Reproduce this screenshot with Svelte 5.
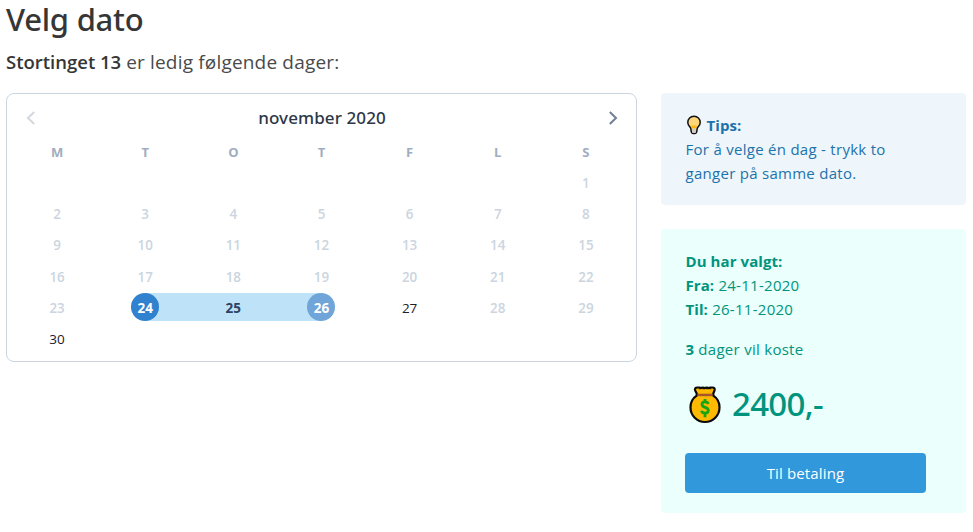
<script>
  const weekdays = ['M', 'T', 'O', 'T', 'F', 'L', 'S'];
  const leading = 6;
  const available = [24, 25, 26, 27, 30];
  const start = 24;
  const end = 26;
  const cells = Array.from({ length: 42 }, (_, i) => {
    const day = i - leading + 1;
    return day >= 1 && day <= 30 ? day : null;
  });
</script>

<main>
  <h1>Velg dato</h1>
  <p class="subtitle"><strong>Stortinget 13</strong> <span>er ledig følgende dager:</span></p>

  <div class="columns">
    <section class="calendar">
      <header>
        <button class="arrow prev" aria-label="Forrige">
          <svg width="10" height="14" viewBox="0 0 10 14"><path d="M8.2 1 2 7l6.2 6" /></svg>
        </button>
        <span class="month">november 2020</span>
        <button class="arrow" aria-label="Neste">
          <svg width="10" height="14" viewBox="0 0 10 14"><path d="M1.8 1 8 7l-6.2 6" /></svg>
        </button>
      </header>
      <div class="grid weekdays">
        {#each weekdays as name}<div>{name}</div>{/each}
      </div>
      <div class="grid days">
        {#each cells as day}
          <div
            class="day"
            class:free={available.includes(day)}
            class:start={day === start}
            class:between={day > start && day < end}
            class:end={day === end}
          >
            {#if day}<span>{day}</span>{/if}
          </div>
        {/each}
      </div>
    </section>

    <aside>
      <div class="box tips">
        <div class="line tip-title">
          <svg class="bulb" width="16" height="20" viewBox="0 0 16 20">
            <path d="M8 1.2a6.1 6.1 0 0 0-6.2 6.2c0 2.7 1.7 3.9 2.7 5.3.4.7.5 3.1.9 4.4.3 1 .9 1.5 1.7 1.5h1.8c.8 0 1.4-.5 1.7-1.5.4-1.3.5-3.7.9-4.4 1-1.4 2.7-2.6 2.7-5.3A6.1 6.1 0 0 0 8 1.2Z" fill="#ffd679" stroke="#111" stroke-width="1.5" />
            <path d="M5.3 10.4h5.4l-.8 3H6.1Z" fill="#ffba08" />
            <path d="M6.1 13.6h3.8v3.5l-.8.9H6.9l-.8-.9Z" fill="#ccc" />
          </svg>
          <strong>Tips:</strong>
        </div>
        <div class="line">For å velge én dag - trykk to</div>
        <div class="line">ganger på samme dato.</div>
      </div>

      <div class="box chosen">
        <div class="line"><strong>Du har valgt:</strong></div>
        <div class="line"><strong>Fra:</strong> 24-11-2020</div>
        <div class="line"><strong>Til:</strong> 26-11-2020</div>
        <div class="line cost"><strong>3</strong> dager vil koste</div>
        <div class="price">
          <svg width="32" height="38" viewBox="0 0 32 38">
            <path d="M8.2 1.5h2l1.5.6 2-.6 2 .6 2-.6 2 .6 1.7-.6h2.1c1.8 0 2.7 1.5 2 3L24.3 7.5v2.2c3.7 2.4 6.2 6.2 6.2 11.8A14.5 14.5 0 0 1 1.5 21.5C1.5 15.9 4 12.1 7.7 9.7V7.5L6.2 4.5c-.7-1.5.2-3 2-3Z" fill="#ffb900" stroke="#0a0a0a" stroke-width="2.2" stroke-linejoin="round" />
            <path d="M8.5 7.7h15v2.5h-15Z" fill="#a5562b" />
            <path d="M10.5 2.2v1m3.7-1v1m3.7-1v1m3.6-1v1" stroke="#0a0a0a" stroke-width="1.5" />
            <path d="M19.3 18c-.4-1.4-1.6-2.1-3.3-2.1-1.9 0-3 .9-3 2.5 0 3.7 6.3 2.3 6.3 6.1 0 1.7-1.3 2.7-3.3 2.7-1.9 0-3.1-.8-3.5-2.5M16 13v3m0 11v4.3" fill="none" stroke="#16a510" stroke-width="2.8" />
          </svg>
          <span>2400,-</span>
        </div>
        <button class="pay">Til betaling</button>
      </div>
    </aside>
  </div>
</main>

<style>
  :global(body) {
    background: #fff;
  }
  main {
    box-sizing: border-box;
    width: 973px;
    height: 532px;
    padding: 0 7px 0 6px;
    font-family: 'Open Sans', 'Noto Sans', sans-serif;
    font-size: 15px;
    color: #4a4a4a;
    white-space: nowrap;
  }
  h1 {
    margin: 0;
    height: 40px;
    line-height: 38px;
    font-family: 'Noto Sans', 'Open Sans', sans-serif;
    font-size: 31px;
    font-weight: 500;
    letter-spacing: -0.25px;
    color: #363636;
  }
  .subtitle {
    margin: 9px 0 0;
    height: 26px;
    line-height: 26px;
    font-size: 19px;
  }
  .subtitle strong {
    font-size: 18.5px;
    font-weight: 600;
    color: #363636;
  }
  .subtitle span {
    letter-spacing: 0.18px;
  }
  .columns {
    display: flex;
    gap: 24px;
    align-items: flex-start;
    margin-top: 18px;
  }
  .calendar {
    box-sizing: border-box;
    width: 631px;
    height: 269px;
    padding: 0 6px;
    border: 1px solid #cbd5e0;
    border-radius: 8px;
  }
  header {
    display: flex;
    align-items: center;
    justify-content: space-between;
    height: 48px;
    padding: 0 12px 0 13px;
  }
  .arrow {
    display: flex;
    padding: 0;
    border: 0;
    background: none;
    color: #718096;
  }
  .prev {
    opacity: 0.3;
  }
  .arrow path {
    fill: none;
    stroke: currentColor;
    stroke-width: 2;
  }
  .month {
    margin-top: -2px;
    font-family: 'Noto Sans', 'Open Sans', sans-serif;
    font-size: 17px;
    font-weight: 500;
    letter-spacing: 0.1px;
    color: #2d3748;
  }
  .grid {
    display: grid;
    grid-template-columns: repeat(7, 1fr);
    text-align: center;
    font-size: 13px;
  }
  .weekdays {
    height: 20px;
    line-height: 20px;
    font-weight: 700;
    color: #a0aec0;
  }
  .days {
    grid-auto-rows: 31.2px;
    margin-top: 4.5px;
  }
  .day {
    display: flex;
    align-items: center;
    justify-content: center;
    font-size: 13.4px;
    font-weight: 600;
    color: #cbd5e0;
  }
  .day span {
    box-sizing: border-box;
    width: 28px;
    height: 28px;
    padding-top: 1px;
    line-height: 28px;
    border-radius: 14px;
  }
  .free {
    font-size: 13.5px;
    font-weight: 400;
    color: #1a202c;
  }
  .start,
  .between,
  .end {
    font-weight: 700;
    background: linear-gradient(#bee3f8, #bee3f8) center / 100% 28px no-repeat;
  }
  .between {
    color: #2c4464;
  }
  .start {
    color: #fff;
    background-position: right center;
    background-size: 50% 28px;
  }
  .end {
    color: #fff;
    background-position: left center;
    background-size: 50% 28px;
  }
  .start span {
    background: #3182ce;
  }
  .end span {
    background: #6fa5d8;
  }
  aside {
    display: flex;
    flex-direction: column;
    gap: 24px;
    width: 305px;
  }
  .box {
    padding: 20px 40px 20px 24px;
    border-radius: 4px;
  }
  .line {
    height: 24px;
    padding-left: 0.5px;
    line-height: 24px;
    letter-spacing: 0.28px;
  }
  .line strong {
    font-weight: 700;
    letter-spacing: 0.08px;
  }
  .tips {
    background: #eef6fc;
    color: #1d72aa;
  }
  .tip-title {
    display: flex;
    align-items: center;
    gap: 5px;
  }
  .chosen {
    background: #ebfffc;
    color: #00947e;
  }
  .cost {
    margin-top: 16px;
  }
  .price {
    display: flex;
    align-items: center;
    gap: 11px;
    height: 48px;
    margin: 20px 0 24px;
    padding-left: 4px;
    font-family: 'Noto Sans', 'Open Sans', sans-serif;
    font-size: 33px;
    font-weight: 500;
    letter-spacing: -0.7px;
  }
  .price span {
    margin-top: -3px;
  }
  .pay {
    display: block;
    width: 241px;
    height: 40px;
    padding: 0;
    border: 0;
    border-radius: 4px;
    background: #3298dc;
    color: #fff;
    font: inherit;
    letter-spacing: 0.15px;
    line-height: 40px;
  }
</style>
